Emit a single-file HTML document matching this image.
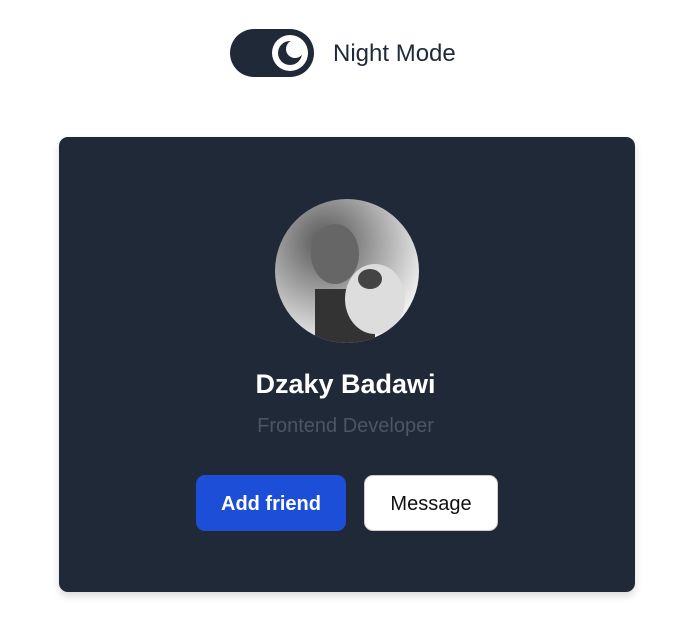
<!DOCTYPE html>
<html><head><style>
body{margin:0;width:691px;height:623px;background:#fff;font-family:"Liberation Sans",sans-serif;position:relative;overflow:hidden}
.tog{position:absolute;left:230px;top:29px;width:84px;height:48px;border-radius:24px;background:#1f2937}
.knob{position:absolute;left:42px;top:6px;width:36px;height:36px;border-radius:50%;background:#fff}
.lbl{position:absolute;left:333px;top:40px;font-size:24px;color:#1f2937}
.card{position:absolute;left:59px;top:137px;width:576px;height:455px;background:#1f2937;border-radius:9px;box-shadow:0 4px 8px rgba(0,0,0,.15)}
.av{position:absolute;left:275px;top:199px;width:144px;height:144px;border-radius:50%;background:radial-gradient(circle at 35% 30%,#555 0,#888 25%,#bbb 50%,#eee 75%,#fff 100%);overflow:hidden}
.name{position:absolute;left:0;width:691px;top:369px;text-align:center;color:#fff;font-size:27px;font-weight:bold}
.sub{position:absolute;left:0;width:691px;top:415px;text-align:center;color:#4b5563;font-size:20px}
.b{position:absolute;top:475px;height:56px;border-radius:9px;font-size:20px;display:flex;align-items:center;justify-content:center;box-sizing:border-box;padding-top:3px}
</style></head><body>
<div class="tog"><div class="knob"><svg width="36" height="36" viewBox="0 0 36 36"><circle cx="18" cy="18" r="12" fill="#1f2937"/><circle cx="23" cy="14" r="9" fill="#fff"/></svg></div></div>
<div class="lbl">Night Mode</div>
<div class="card"></div>
<div class="av"><svg width="144" height="144"><ellipse cx="60" cy="55" rx="24" ry="30" fill="#666"/><rect x="40" y="90" width="60" height="60" fill="#333"/><ellipse cx="100" cy="100" rx="30" ry="35" fill="#ddd"/><ellipse cx="95" cy="80" rx="12" ry="10" fill="#444"/></svg></div>
<div class="name">Dzaky Badawi</div>
<div class="sub">Frontend Developer</div>
<div class="b" style="left:196px;width:150px;background:#1d4ed8;color:#fff;font-weight:bold">Add friend</div>
<div class="b" style="left:364px;width:134px;background:#fff;color:#111;border:1px solid #ccc">Message</div>
</body></html>
